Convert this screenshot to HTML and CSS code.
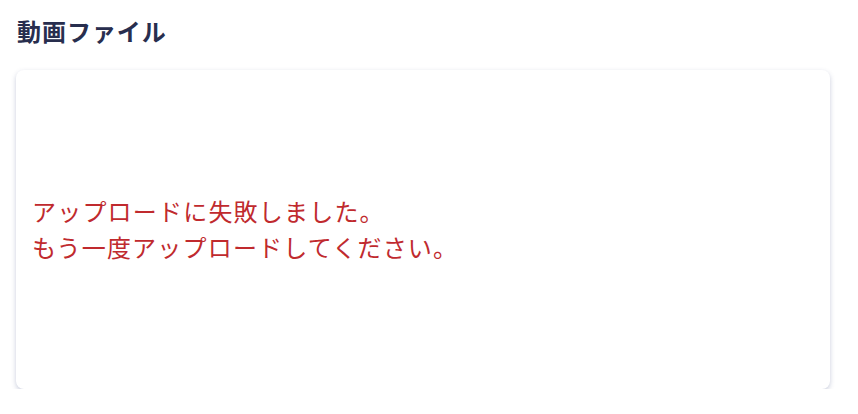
FILE: index.html
```html
<!DOCTYPE html>
<html lang="ja">
<head>
    <meta charset="UTF-8">
    <meta name="viewport" content="width=device-width, initial-scale=1.0">
    <title>動画ファイル</title>
    <link rel="stylesheet" href="styles.css">
</head>
<body>
    <!-- Video upload section -->
    <section class="upload-section">
        <h2 class="section-title">動画ファイル</h2>
        <div class="upload-card">
            <p class="upload-error">アップロードに失敗しました。<br>もう一度アップロードしてください。</p>
        </div>
    </section>
</body>
</html>
```

FILE: styles.css
```css
/* General page styles */
body {
    font-family: "Noto Sans CJK JP", "Noto Sans", sans-serif;
    background-color: #fff;
    margin: 0;
    padding: 14px 28px 0 16px;
}
.section-title {
    margin: 0 0 22px 1px;
    font-size: 24px;
    font-weight: bold;
    line-height: 34px;
    letter-spacing: 0.04em;
    color: #282e4e;
}
/* Card holding the upload state */
.upload-card {
    height: 319px;
    background-color: #fff;
    border-radius: 8px;
    box-shadow: 0 2px 5px rgba(60, 75, 130, 0.28);
    display: flex;
    align-items: center;
    padding: 0 16px;
}
.upload-error {
    margin: 0 0 2px;
    font-size: 24px;
    line-height: 36px;
    letter-spacing: 0.05em;
    color: #c02a2e;
}
```
